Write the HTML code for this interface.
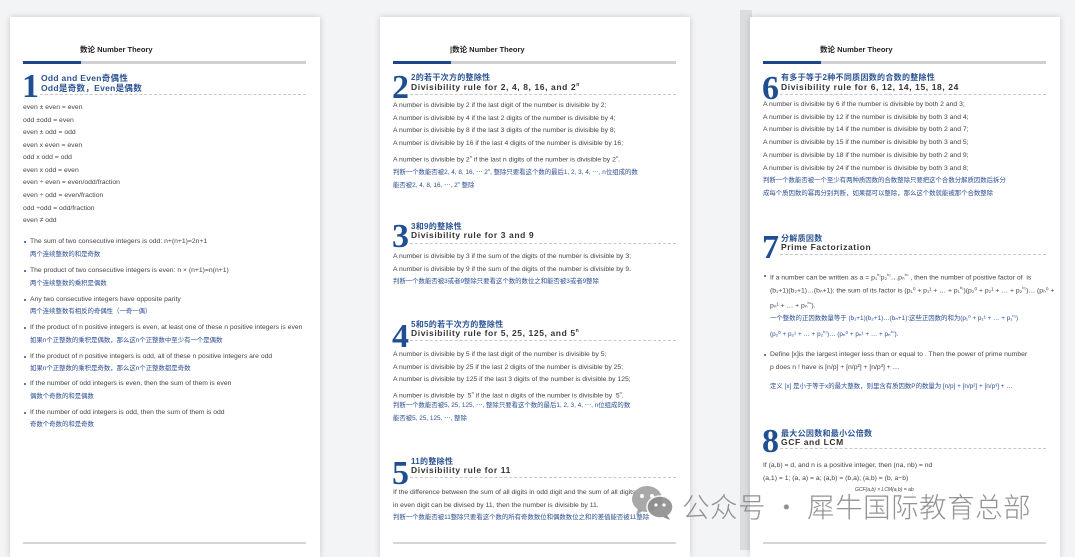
<!DOCTYPE html>
<html><head><meta charset="utf-8"><style>
*{margin:0;padding:0;box-sizing:border-box}
body{width:1075px;height:546px;background:#f3f4f6;position:relative;overflow:hidden;font-family:"Liberation Sans","Noto Sans CJK SC",sans-serif}
.pg{position:absolute;top:17px;height:540px;width:310px;background:#fff;box-shadow:0 0 6px rgba(0,0,0,.18)}
.pg div{position:absolute;white-space:nowrap}
.hd{left:70px;top:27px;font-size:7.5px;font-weight:bold;color:#222}
.bar{left:13px;top:44px;width:283px;height:3px;background:#cfd0d3}
.bar:before{content:"";position:absolute;left:0;top:0;width:58px;height:3px;background:#1d4588}
.num{left:12px;font-family:"Liberation Serif",serif;font-size:34px;font-weight:bold;color:#1f4f91;line-height:30px}
.t1{left:31px;font-size:8px;color:#2a5394;font-weight:bold;letter-spacing:.3px}
.t2{left:31px;font-size:8.5px;color:#333;font-weight:bold;letter-spacing:.6px}
.dash{left:30px;width:266px;border-top:1px dashed #c8c8c8;height:0}
.l{left:13px;font-size:6.8px;color:#444;line-height:8px}
.c{left:13px;font-size:6.4px;color:#2d4f95;line-height:8px}
.b{left:20px}
.dot{left:14px;width:2.4px;height:2.4px;background:#2a4f8f;border-radius:50%}
.bot{left:13px;top:525px;width:283px;height:2px;background:#d5d6d9}
</style></head><body>

<div class="pg" style="left:10px">
<div class="hd">数论 Number Theory</div><div class="bar"></div>
<div class="num" style="top:55px">1</div>
<div class="t1" style="top:55px;font-size:8.5px">Odd and Even奇偶性</div>
<div class="t1" style="top:65px;font-size:8.5px">Odd是奇数，Even是偶数</div>
<div class="dash" style="top:77px"></div>
<div class="l" style="top:87px">even ± even = even</div>
<div class="l" style="top:100px">odd ±odd = even</div>
<div class="l" style="top:112px">even ± odd = odd</div>
<div class="l" style="top:125px">even x even = even</div>
<div class="l" style="top:137px">odd x odd = odd</div>
<div class="l" style="top:150px">even x odd = even</div>
<div class="l" style="top:162px">even ÷ even = even/odd/fraction</div>
<div class="l" style="top:175px">even ÷ odd = even/fraction</div>
<div class="l" style="top:188px">odd ÷odd = odd/fraction</div>
<div class="l" style="top:200px">even ≠ odd</div>
<div class="dot" style="top:224px"></div><div class="l b" style="top:221px">The sum of two consecutive integers is odd: n+(n+1)=2n+1</div>
<div class="c b" style="top:234px">两个连续整数的和是奇数</div>
<div class="dot" style="top:253px"></div><div class="l b" style="top:250px">The product of two consecutive integers is even: n × (n+1)=n(n+1)</div>
<div class="c b" style="top:263px">两个连续整数的乘积是偶数</div>
<div class="dot" style="top:282px"></div><div class="l b" style="top:279px">Any two consecutive integers have opposite parity</div>
<div class="c b" style="top:291px">两个连续整数有相反的奇偶性（一奇一偶）</div>
<div class="dot" style="top:310px"></div><div class="l b" style="top:307px">If the product of n positive integers is even, at least one of these n positive integers is even</div>
<div class="c b" style="top:320px">如果n个正整数的乘积是偶数，那么这n个正整数中至少有一个是偶数</div>
<div class="dot" style="top:339px"></div><div class="l b" style="top:336px">If the product of n positive integers is odd, all of these n positive integers are odd</div>
<div class="c b" style="top:348px">如果n个正整数的乘积是奇数，那么这n个正整数都是奇数</div>
<div class="dot" style="top:366px"></div><div class="l b" style="top:363px">If the number of odd integers is even, then the sum of them is even</div>
<div class="c b" style="top:376px">偶数个奇数的和是偶数</div>
<div class="dot" style="top:395px"></div><div class="l b" style="top:392px">If the number of odd integers is odd, then the sum of them is odd</div>
<div class="c b" style="top:404px">奇数个奇数的和是奇数</div>
<div class="bot"></div>
</div>

<div class="pg" style="left:380px">
<div class="hd">|数论 Number Theory</div><div class="bar"></div>
<div class="num" style="top:56px">2</div>
<div class="t1" style="top:55px">2的若干次方的整除性</div>
<div class="t2" style="top:65px">Divisibility rule for 2, 4, 8, 16, and 2<sup style="font-size:5px">n</sup></div>
<div class="dash" style="top:77px"></div>
<div class="l" style="top:85px">A number is divisible by 2 if the last digit of the number is divisible by 2;</div>
<div class="l" style="top:98px">A number is divisible by 4 if the last 2 digits of the number is divisible by 4;</div>
<div class="l" style="top:110px">A number is divisible by 8 if the last 3 digits of the number is divisible by 8;</div>
<div class="l" style="top:123px">A number is divisible by 16 if the last 4 digits of the number is divisible by 16;</div>
<div class="l" style="top:136px">A number is divisible by 2<sup style="font-size:4px">n</sup> if the last n digits of the number is divisible by 2<sup style="font-size:4px">n</sup>.</div>
<div class="c" style="top:149px">判断一个数能否被2, 4, 8, 16, ⋯ 2<sup style="font-size:4px">n</sup>, 整除只要看这个数的最后1, 2, 3, 4, ⋯, n位组成的数</div>
<div class="c" style="top:162px">能否被2, 4, 8, 16, ⋯, 2<sup style="font-size:4px">n</sup> 整除</div>
<div class="num" style="top:205px">3</div>
<div class="t1" style="top:204px">3和9的整除性</div>
<div class="t2" style="top:213px">Divisibility rule for 3 and 9</div>
<div class="dash" style="top:226px"></div>
<div class="l" style="top:236px">A number is divisible by 3 if the sum of the digits of the number is divisible by 3;</div>
<div class="l" style="top:249px">A number is divisible by 9 if the sum of the digits of the number is divisible by 9.</div>
<div class="c" style="top:261px">判断一个数能否被3或者9整除只要看这个数的数位之和能否被3或者9整除</div>
<div class="num" style="top:305px">4</div>
<div class="t1" style="top:302px">5和5的若干次方的整除性</div>
<div class="t2" style="top:311px">Divisibility rule for 5, 25, 125, and 5<sup style="font-size:5px">n</sup></div>
<div class="dash" style="top:323px"></div>
<div class="l" style="top:334px">A number is divisible by 5 if the last digit of the number is divisible by 5;</div>
<div class="l" style="top:347px">A number is divisible by 25 if the last 2 digits of the number is divisible by 25;</div>
<div class="l" style="top:359px">A number is divisible by 125 if the last 3 digits of the number is divisible by 125;</div>
<div class="l" style="top:372px">A number is divisible by &nbsp;5<sup style="font-size:4px">n</sup> if the last n digits of the number is divisible by &nbsp;5<sup style="font-size:4px">n</sup>.</div>
<div class="c" style="top:385px">判断一个数能否被5, 25, 125, ⋯, 整除只要看这个数的最后1, 2, 3, 4, ⋯, n位组成的数</div>
<div class="c" style="top:398px">能否被5, 25, 125, ⋯, 整除</div>
<div class="num" style="top:442px">5</div>
<div class="t1" style="top:439px">11的整除性</div>
<div class="t2" style="top:448px">Divisibility rule for 11</div>
<div class="dash" style="top:460px"></div>
<div class="l" style="top:472px">If the difference between the sum of all digits in odd digit and the sum of all digits</div>
<div class="l" style="top:485px">in even digit can be divised by 11, then the number is divisible by 11.</div>
<div class="c" style="top:497px">判断一个数能否被11整除只要看这个数的所有奇数数位和偶数数位之和的差值能否被11整除</div>
<div class="bot"></div>
</div>

<div style="position:absolute;left:740px;top:10px;width:12px;height:540px;background:#dcdde0"></div>
<div class="pg" style="left:750px">
<div class="hd">数论 Number Theory</div><div class="bar"></div>
<div class="num" style="top:57px">6</div>
<div class="t1" style="top:55px">有多于等于2种不同质因数的合数的整除性</div>
<div class="t2" style="top:65px">Divisibility rule for 6, 12, 14, 15, 18, 24</div>
<div class="dash" style="top:77px"></div>
<div class="l" style="top:84px">A number is divisible by 6 if the number is divisible by both 2 and 3;</div>
<div class="l" style="top:97px">A number is divisible by 12 if the number is divisible by both 3 and 4;</div>
<div class="l" style="top:109px">A number is divisible by 14 if the number is divisible by both 2 and 7;</div>
<div class="l" style="top:122px">A number is divisible by 15 if the number is divisible by both 3 and 5;</div>
<div class="l" style="top:135px">A number is divisible by 18 if the number is divisible by both 2 and 9;</div>
<div class="l" style="top:148px">A number is divisible by 24 if the number is divisible by both 3 and 8;</div>
<div class="c" style="top:160px">判断一个数能否被一个至少有两种质因数的合数整除只要把这个合数分解质因数后拆分</div>
<div class="c" style="top:173px">成每个质因数的幂再分别判断，如果都可以整除，那么这个数就能被那个合数整除</div>
<div class="num" style="top:216px">7</div>
<div class="t1" style="top:216px">分解质因数</div>
<div class="t2" style="top:225px">Prime Factorization</div>
<div class="dash" style="top:237px"></div>
<div class="dot" style="top:258px"></div><div class="l b" style="top:254px">If a number can be written as a = p₁<sup style="font-size:4px">b₁</sup>p₂<sup style="font-size:4px">b₂</sup>⋯pₙ<sup style="font-size:4px">bₙ</sup> , then the number of positive factor of &nbsp;is</div>
<div class="l b" style="top:267px">(b₁+1)(b₂+1)…(bₙ+1): the sum of its factor is (p₁⁰ + p₁¹ + … + p₁<sup style="font-size:4px">b₁</sup>)(p₂⁰ + p₂¹ + … + p₂<sup style="font-size:4px">b₂</sup>)… (pₙ⁰ +</div>
<div class="l b" style="top:282px">pₙ¹ + … + pₙ<sup style="font-size:4px">bₙ</sup>).</div>
<div class="c b" style="top:295px">一个整数的正因数数量等于 (b₁+1)(b₂+1)…(bₙ+1):这些正因数的和为(p₁⁰ + p₁¹ + … + p₁<sup style="font-size:4px">b₁</sup>)</div>
<div class="c b" style="top:311px">(p₂⁰ + p₂¹ + … + p₂<sup style="font-size:4px">b₂</sup>)… (pₙ⁰ + pₙ¹ + … + pₙ<sup style="font-size:4px">bₙ</sup>).</div>
<div class="dot" style="top:337px"></div><div class="l b" style="top:334px">Define [x]is the largest integer less than or equal to . Then the power of prime number</div>
<div class="l b" style="top:347px">p does n ! have is [n/p] + [n/p²] + [n/p³] + …</div>
<div class="c b" style="top:366px">定义 [x] 是小于等于x的最大整数，则里含有质因数P的数量为 [n/p] + [n/p²] + [n/p³] + …</div>
<div class="num" style="top:410px">8</div>
<div class="t1" style="top:411px">最大公因数和最小公倍数</div>
<div class="t2" style="top:420px">GCF and LCM</div>
<div class="dash" style="top:431px"></div>
<div class="l" style="top:445px">If (a,b) = d, and n is a positive integer, then (na, nb) = nd</div>
<div class="l" style="top:458px">(a,1) = 1; (a, a) = a; (a,b) = (b,a); (a,b) = (b, a−b)</div>
<div class="l" style="top:469px;left:105px;font-size:5px;font-style:italic">GCF(a,b) × LCM(a,b) = ab</div>
<div class="bot"></div>
</div>

<svg style="position:absolute;left:630px;top:484px" width="48" height="38" viewBox="0 0 48 38">
<ellipse cx="17" cy="15" rx="15" ry="13" fill="#9a9a9a" opacity=".85"/>
<path d="M8 25 L6 31 L13 27Z" fill="#9a9a9a" opacity=".85"/>
<ellipse cx="30" cy="23" rx="13" ry="11" fill="#8d8d8d" opacity=".9" stroke="#fff" stroke-width="1.5"/>
<path d="M37 31 L40 36 L33 33Z" fill="#8d8d8d"/>
<circle cx="12" cy="12" r="2" fill="#fff"/><circle cx="22" cy="12" r="2" fill="#fff"/>
<circle cx="26" cy="21" r="1.6" fill="#fff"/><circle cx="34" cy="21" r="1.6" fill="#fff"/>
</svg>
<div style="position:absolute;left:682px;top:485px;font-family:'Noto Sans CJK SC',sans-serif;font-weight:300;font-size:27.5px;color:rgba(128,128,128,.85);white-space:nowrap;letter-spacing:.5px">公众号 · 犀牛国际教育总部</div>
</body></html>
